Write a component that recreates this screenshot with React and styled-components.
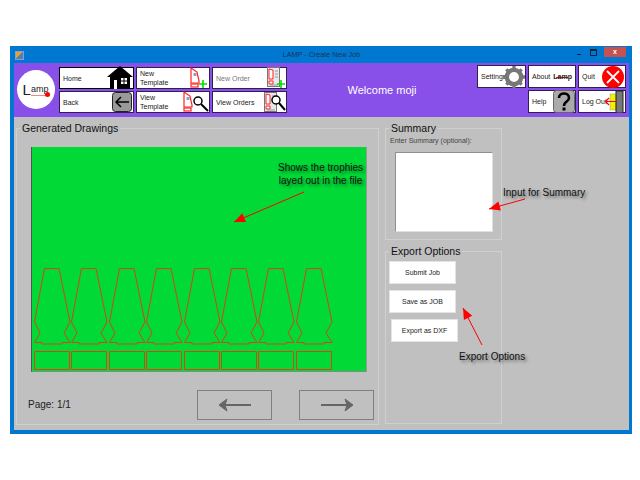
import styled, { createGlobalStyle } from "styled-components";

const GlobalStyle = createGlobalStyle`
  html, body {
    margin: 0;
    padding: 0;
    background: #fff;
    font-family: "Liberation Sans", Arial, sans-serif;
  }
`;

const Page = styled.div`
  width: 640px;
  height: 480px;
  padding: 46px 0 0 10px;
  box-sizing: border-box;
  overflow: hidden;
`;

const Window = styled.div`
  position: relative;
  width: 622px;
  height: 388px;
  box-sizing: border-box;
  border: solid #0078d2;
  border-width: 0 3px 4px 4px;
  background: #c0c0c0;
  display: flex;
  flex-direction: column;
`;

const TitleBar = styled.div`
  height: 17px;
  flex: none;
  background: #0078d2;
  display: flex;
  align-items: flex-start;
  position: relative;
`;

const AppIcon = styled.div`
  width: 7px;
  height: 7px;
  margin: 5px 0 0 1px;
  background: linear-gradient(135deg, #e8a030 50%, #4a80c8 50%);
  border: 1px solid #8aa0c0;
`;

const Title = styled.div`
  flex: 1;
  text-align: center;
  font-size: 7.2px;
  line-height: 17px;
  color: #1c3550;
  padding-left: 42px;
`;

const WinControls = styled.div`
  display: flex;
  align-items: flex-start;
`;

const MinBtn = styled.div`
  width: 4px;
  height: 1px;
  margin: 8px 9px 0 0;
  background: #123;
`;

const MaxBtn = styled.div`
  width: 5px;
  height: 4px;
  margin: 3px 7px 0 0;
  border: 1px solid #123;
  border-top-width: 2px;
`;

const CloseBtn = styled.div`
  width: 22px;
  height: 10px;
  margin: 1px 3px 0 0;
  background: #c75050;
  color: #fff;
  font-size: 7px;
  line-height: 10px;
  text-align: center;
  font-weight: bold;
`;

const Header = styled.div`
  height: 54px;
  flex: none;
  background: #8850e8;
  display: flex;
  align-items: flex-start;
`;

const Logo = styled.div`
  width: 38px;
  height: 39px;
  margin: 7px 0 0 3px;
  border-radius: 50%;
  background: #fff;
  flex: none;
  position: relative;
  display: flex;
  align-items: center;
  justify-content: center;
  color: #222;
`;

const LogoL = styled.span`
  font-size: 15px;
  line-height: 15px;
  margin-top: -1px;
`;

const LogoRest = styled.span`
  font-size: 9px;
  border-bottom: 1px solid #e88;
  line-height: 9px;
  padding: 0 1px 1px 0;
  margin-top: 1px;
`;

const LogoDot = styled.span`
  position: absolute;
  right: 5px;
  bottom: 12px;
  width: 5px;
  height: 5px;
  border-radius: 50%;
  background: #f00;
`;

const NavGrid = styled.div`
  display: grid;
  grid-template-columns: 75px 74px 75px;
  grid-auto-rows: 22px;
  column-gap: 2px;
  row-gap: 2px;
  margin: 4px 0 0 4px;
`;

const ToolButton = styled.div`
  background: #fff;
  border: 1px solid ${(p) => (p.$active ? "#000" : "#302050")};
  box-sizing: border-box;
  display: flex;
  align-items: center;
  justify-content: space-between;
  padding-left: 3px;
  font-size: 7px;
  line-height: 9px;
  color: ${(p) => (p.$muted ? "#777" : "#222")};
  white-space: nowrap;
  grid-column: ${(p) => p.$col || "auto"};
  grid-row: ${(p) => p.$row || "auto"};
`;

const Welcome = styled.div`
  flex: 1;
  text-align: center;
  color: #fff;
  font-size: 11px;
  line-height: 54px;
`;

const SideGrid = styled.div`
  display: grid;
  grid-template-columns: 49px 48px 48px;
  grid-template-rows: 23px 23px;
  column-gap: 2px;
  row-gap: 2px;
  margin: 2px 3px 0 0;
`;

const Content = styled.div`
  flex: 1;
  display: flex;
  gap: 6px;
  padding: 0 0 5px 2px;
  min-height: 0;
`;

const Group = styled.fieldset`
  margin: 0;
  padding: 0;
  min-width: 0;
  box-sizing: border-box;
  border: 1px solid #d0d0d0;
  width: ${(p) => p.$w}px;
  height: ${(p) => p.$h}px;
`;

const GroupTitle = styled.legend`
  font-size: 10.500px;
  line-height: 13px;
  color: #111;
  padding: 0 2px;
  margin-left: 3px;
`;

const Column = styled.div`
  display: flex;
  flex-direction: column;
  gap: 5px;
  padding-top: 5px;
`;

const DrawingArea = styled.div`
  width: 336px;
  height: 225px;
  margin: 12px 0 0 14px;
  background: #00d936;
  border-left: 1px solid #555;
  border-bottom: 1px solid #888;
  border-right: 1px solid #999;
  box-sizing: border-box;
`;

const PagerRow = styled.div`
  display: flex;
  align-items: center;
  gap: 27px;
  margin: 18px 0 0 11px;
  font-size: 10px;
  color: #222;
`;

const PageLabel = styled.div`
  width: 142px;
  flex: none;
  padding-bottom: 1px;
`;

const PagerButton = styled.div`
  width: 75px;
  height: 30px;
  flex: none;
  box-sizing: border-box;
  border: 1px solid #808080;
  display: flex;
  align-items: center;
  justify-content: center;
`;

const Hint = styled.div`
  font-size: 7px;
  line-height: 9px;
  color: #444;
  margin: 1px 0 0 4px;
`;

const SummaryBox = styled.div`
  width: 98px;
  height: 80px;
  box-sizing: border-box;
  margin: 7px 0 0 9px;
  background: #fff;
  border: 1px solid #909090;
  border-right-color: #e0e0e0;
  border-bottom-color: #e0e0e0;
`;

const ExportButton = styled.div`
  width: 67px;
  height: 23px;
  margin: 0 0 6px ${(p) => p.$indent || 3}px;
  background: #fff;
  border: 1px solid #e4e4e4;
  box-sizing: border-box;
  display: flex;
  align-items: center;
  justify-content: center;
  font-size: 7px;
  color: #222;
`;

const ExportList = styled.div`
  padding-top: 3px;
`;

const Note = styled.div`
  position: absolute;
  left: ${(p) => p.$x}px;
  top: ${(p) => p.$y}px;
  font-size: 10px;
  line-height: 13px;
  color: #111;
  text-align: center;
  white-space: nowrap;
  text-shadow: 2px 2px 3px rgba(0, 0, 0, 0.45);
`;

const ArrowLayer = styled.svg`
  position: absolute;
  left: -14px;
  top: 0;
  width: 640px;
  height: 388px;
  pointer-events: none;
`;

// one trophy plus its base, x is the left edge inside the green area
const Trophy = ({ x }) => (
  <g transform={`translate(${x} 0)`} fill="none" stroke="#d24810" strokeWidth="1">
    <path d="M10.500 121.500 H25 L36 175 L30 186 L36 195.500 L28 195.500 V197 H8 V195.500 L0.500 195.500 L6 186 L0.500 175 Z" />
    <path d="M0.500 204.500 H35.500 V222.500 H0.500 Z" />
  </g>
);

const HomeIcon = () => (
  <svg width="26" height="23" viewBox="0 0 26 23" style={{ margin: "-1px 0 0 0" }}>
    <path d="M13 0 L26 11 H23 V23 H3 V11 H0 Z" fill="#000" />
    <rect x="7" y="14" width="3" height="9" fill="#fff" />
    <rect x="14" y="12" width="6" height="6" fill="#fff" />
    <path d="M17 12 V18 M14 15 H20" stroke="#000" />
  </svg>
);

const BackIcon = () => (
  <svg width="20" height="20" viewBox="0 0 20 20" style={{ marginRight: "1px" }}>
    <rect x="0.500" y="0.500" width="19" height="19" rx="3" fill="#999" stroke="#222" />
    <path d="M4 10 H17 M9 5 L4 10 L9 15" fill="none" stroke="#000" strokeWidth="1.500" />
  </svg>
);

const TemplateShape = () => (
  <g fill="none" stroke="#f22" strokeWidth="1.200">
    <path d="M1 1 L7 5 L9 14 V16 H1 Z" fill="#fff" />
    <rect x="1" y="17" width="7" height="3" />
    <rect x="3.500" y="6" width="3" height="3" fill="#99b" stroke="none" />
  </g>
);

const PlusMark = () => <path d="M9 17 H17 M13 13 V21" stroke="#00e000" strokeWidth="1.600" />;

const Lens = () => (
  <g fill="none" stroke="#000">
    <circle cx="15" cy="10" r="4" strokeWidth="1.500" fill="#fff" />
    <path d="M18 13 L25 20" strokeWidth="2" />
  </g>
);

const NewTemplateIcon = () => (
  <svg width="18" height="22" viewBox="0 0 18 22" style={{ marginRight: "1px" }}>
    <TemplateShape />
    <PlusMark />
  </svg>
);

const ViewTemplateIcon = () => (
  <svg width="26" height="22" viewBox="0 0 26 22">
    <TemplateShape />
    <Lens />
  </svg>
);

const OrderSheet = () => (
  <g>
    <rect x="0.500" y="0.500" width="12" height="19" fill="#e8e8e8" stroke="#777" />
    <path d="M2 2 L6 3 V12 H2 Z M2 14 H6 V17 H2 Z" fill="#fff" stroke="#f22" />
    <path d="M8 4 H11 M8 7 H11 M8 10 H11 M3 18 H11" stroke="#999" />
  </g>
);

const NewOrderIcon = () => (
  <svg width="19" height="22" viewBox="0 0 19 22">
    <OrderSheet />
    <path d="M10 17 H18 M14 13 V21" stroke="#00e000" strokeWidth="1.600" />
  </svg>
);

const ViewOrdersIcon = () => (
  <svg width="22" height="20" viewBox="0 0 22 20">
    <OrderSheet />
    <g fill="none" stroke="#000">
      <circle cx="12" cy="8" r="4" strokeWidth="1.500" fill="#fff" />
      <path d="M15 11 L21 18" strokeWidth="2" />
    </g>
  </svg>
);

const GearIcon = () => (
  <svg width="22" height="22" viewBox="0 0 20 20" style={{ marginLeft: "-7px", flex: "none" }}>
    <circle cx="10" cy="10" r="6.500" fill="none" stroke="#777" strokeWidth="4" />
    <path
      d="M10 0 V20 M0 10 H20 M3 3 L17 17 M17 3 L3 17"
      stroke="#777"
      strokeWidth="3"
      strokeDasharray="3.500 13 3.500 0"
    />
  </svg>
);

const AboutMark = styled.span`
  font-size: 7px;
  font-weight: bold;
  color: #222;
  margin-right: 3px;
  background: linear-gradient(#f00, #f00) no-repeat 3px 5px / 12px 1px;
`;

const QuitIcon = () => (
  <svg width="22" height="22" viewBox="0 0 22 22" style={{ marginRight: "1px" }}>
    <circle cx="11" cy="11" r="11" fill="#f00" />
    <path d="M5 5 L17 17 M17 5 L5 17" stroke="#fff" strokeWidth="1.800" />
  </svg>
);

const HelpIcon = () => (
  <svg width="22" height="23" viewBox="0 0 22 23" style={{ margin: "-1px 0 0 0" }}>
    <rect x="0.500" y="0.500" width="21" height="22" rx="3" fill="#aaa" stroke="#666" />
    <path d="M6 8 C6 2 16 2 16 8 C16 12 11 11 11 16" fill="none" stroke="#000" strokeWidth="2.600" />
    <rect x="9.500" y="17.500" width="3" height="3" fill="#000" />
  </svg>
);

const LogOutIcon = () => (
  <svg width="20" height="23" viewBox="0 0 20 23" style={{ marginLeft: "-11px", flex: "none" }}>
    <rect x="5" y="4" width="6" height="16" fill="#f2f200" stroke="#999" strokeWidth="0.500" />
    <rect x="11" y="1" width="7" height="22" fill="#777" stroke="#222" />
    <path d="M11 11.500 H1 M4 8 L0.500 11.500 L4 15" fill="none" stroke="#f00" strokeWidth="1.200" />
  </svg>
);

const PagerArrow = ({ flip }) => (
  <svg width="34" height="14" viewBox="0 0 34 14" style={flip ? { transform: "scaleX(-1)" } : undefined}>
    <path d="M3 7 H33" stroke="#666" strokeWidth="2" />
    <path d="M9 1 L1 7 L9 13 L7 7 Z" fill="#666" stroke="#666" />
  </svg>
);

const ArrowLine = ({ x1, y1, x2, y2 }) => {
  const a = Math.atan2(y2 - y1, x2 - x1);
  const len = 12;
  const wing = 0.4;
  const p1 = [x2 - len * Math.cos(a - wing), y2 - len * Math.sin(a - wing)];
  const p2 = [x2 - len * Math.cos(a + wing), y2 - len * Math.sin(a + wing)];
  return (
    <g>
      <line x1={x1} y1={y1} x2={x2} y2={y2} stroke="#f00" strokeWidth="1" />
      <polygon points={`${x2},${y2} ${p1.join(",")} ${p2.join(",")}`} fill="#f00" />
    </g>
  );
};

const trophyPositions = [0, 37, 75, 112, 150, 187, 224, 262];

export default function App() {
  return (
    <Page>
      <GlobalStyle />
      <Window>
        <TitleBar>
          <AppIcon />
          <Title>LAMP - Create New Job</Title>
          <WinControls>
            <MinBtn />
            <MaxBtn />
            <CloseBtn>x</CloseBtn>
          </WinControls>
        </TitleBar>
        <Header>
          <Logo>
            <LogoL>L</LogoL>
            <LogoRest>amp</LogoRest>
            <LogoDot />
          </Logo>
          <NavGrid>
            <ToolButton $active>
              Home
              <HomeIcon />
            </ToolButton>
            <ToolButton>
              <span>
                New
                <br />
                Template
              </span>
              <NewTemplateIcon />
            </ToolButton>
            <ToolButton $muted>
              New Order
              <NewOrderIcon />
            </ToolButton>
            <ToolButton>
              Back
              <BackIcon />
            </ToolButton>
            <ToolButton>
              <span>
                View
                <br />
                Template
              </span>
              <ViewTemplateIcon />
            </ToolButton>
            <ToolButton>
              View Orders
              <ViewOrdersIcon />
            </ToolButton>
          </NavGrid>
          <Welcome>Welcome moji</Welcome>
          <SideGrid>
            <ToolButton $col="1" $row="1">
              Settings
              <GearIcon />
            </ToolButton>
            <ToolButton $col="2" $row="1">
              About
              <AboutMark>Lamp</AboutMark>
            </ToolButton>
            <ToolButton $col="3" $row="1">
              Quit
              <QuitIcon />
            </ToolButton>
            <ToolButton $col="2" $row="2">
              Help
              <HelpIcon />
            </ToolButton>
            <ToolButton $col="3" $row="2">
              Log Out
              <LogOutIcon />
            </ToolButton>
          </SideGrid>
        </Header>
        <Content>
          <Column>
            <Group $w={363} $h={303}>
              <GroupTitle>Generated Drawings</GroupTitle>
              <DrawingArea>
                <svg width="336" height="224" viewBox="0 0 336 224" style={{ display: "block", overflow: "visible" }}>
                  {trophyPositions.map((x) => (
                    <Trophy key={x} x={x + 2} />
                  ))}
                </svg>
              </DrawingArea>
              <PagerRow>
                <PageLabel>Page: 1/1</PageLabel>
                <PagerButton>
                  <PagerArrow />
                </PagerButton>
                <PagerButton>
                  <PagerArrow flip />
                </PagerButton>
              </PagerRow>
            </Group>
          </Column>
          <Column>
            <Group $w={117} $h={118}>
              <GroupTitle>Summary</GroupTitle>
              <Hint>Enter Summary (optional):</Hint>
              <SummaryBox />
            </Group>
            <Group $w={117} $h={179}>
              <GroupTitle>Export Options</GroupTitle>
              <ExportList>
                <ExportButton>Submit Job</ExportButton>
                <ExportButton>Save as JOB</ExportButton>
                <ExportButton $indent={5}>Export as DXF</ExportButton>
              </ExportList>
            </Group>
          </Column>
        </Content>
        <ArrowLayer viewBox="0 0 640 388">
          <ArrowLine x1={304} y1={146} x2={234} y2={176} />
          <ArrowLine x1={525} y1={153} x2={489} y2={163} />
          <ArrowLine x1={482} y1={299} x2={463} y2={262} />
        </ArrowLayer>
        <Note $x={264} $y={115}>
          Shows the trophies
          <br />
          layed out in the file
        </Note>
        <Note $x={489} $y={140}>
          Input for Summary
        </Note>
        <Note $x={445} $y={304}>
          Export Options
        </Note>
      </Window>
    </Page>
  );
}
